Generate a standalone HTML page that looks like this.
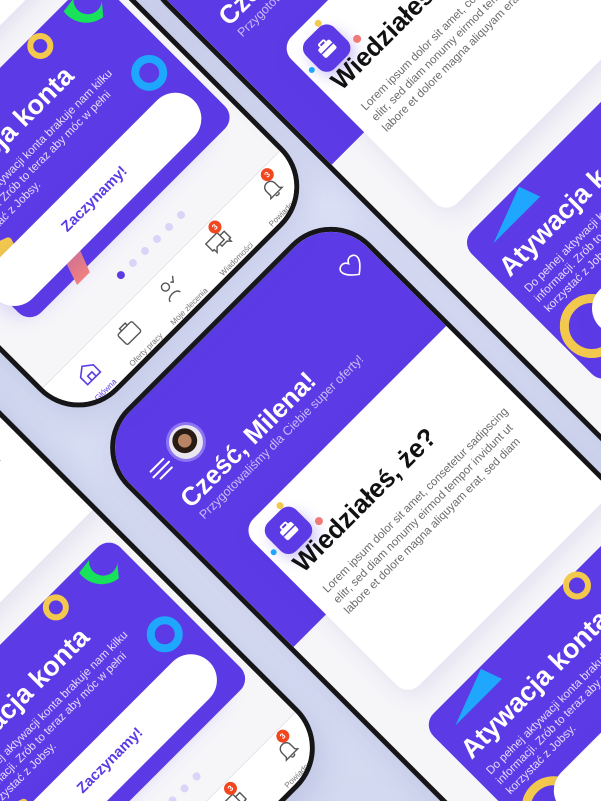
<!DOCTYPE html>
<html><head><meta charset="utf-8">
<style>
html{margin:0;padding:0;width:601px;height:801px;overflow:hidden}
body{margin:0;padding:0;width:601px;height:801px;overflow:hidden;position:relative;
background:radial-gradient(ellipse at 55% 45%,#e1e5fa 0%,#d6dcf2 55%,#ccd3ec 100%);
font-family:"Liberation Sans","Noto Sans CJK JP",sans-serif}
#stage{position:absolute;left:0;top:0;width:0;height:0;transform-origin:0 0;transform:rotate(-45deg)}
.phone{position:absolute;width:345px;height:745px;border:5px solid #161618;border-radius:56px;background:#f6f6f9;overflow:hidden;box-sizing:border-box;box-shadow:0 10px 30px rgba(80,80,160,.15)}
.hdr{position:absolute;left:0;top:0;width:100%;height:282px;background:#5c3be6}
.abs{position:absolute}
.heart{left:298px;top:45px}
.av{left:49px;top:41px;width:34px;height:34px;border-radius:50%;background:#8c74f2;padding:3px}
.av i{display:block;width:34px;height:34px;border-radius:50%;background:radial-gradient(circle at 50% 45%,#b98463 0 26%,#2a1a14 28% 48%,#e9e6ef 50%)}
.hb span{position:absolute;height:2px;background:#fff;border-radius:1px}
.t1{left:25px;top:88px;font-size:26px;font-weight:bold;color:#fff;white-space:nowrap}
.t2{left:27px;top:118px;font-size:12.5px;color:#c7bdf6;white-space:nowrap}
.c1{left:46px;top:163px;width:340px;height:235px;background:#fff;border-radius:16px;box-shadow:0 8px 24px rgba(60,40,160,.10)}
.ic{left:13px;top:13px;width:40px;height:40px;border-radius:11px;background:#5c3be6;box-shadow:0 8px 14px rgba(92,59,230,.3)}
.dot{position:absolute;border-radius:50%}
.wt{left:13px;top:50px;font-size:26px;font-weight:bold;color:#111;white-space:nowrap}
.lor{left:16px;top:95px;font-size:11.5px;line-height:15px;color:#6b6b6b;white-space:nowrap}
.c2{left:36px;top:428px;width:292px;height:202px;background:#5c3be6;border-radius:16px}
.at{left:46px;top:464px;font-size:27px;font-weight:bold;color:#fff;white-space:nowrap}
.ab{left:49px;top:502px;font-size:11.5px;line-height:14px;color:#e3dcff;white-space:nowrap}
.btn{width:280px;height:52px;border-radius:26px;background:#fff;box-shadow:0 10px 22px rgba(92,59,230,.25);font-size:15px;font-weight:bold;color:#5c3be6;text-align:center;line-height:52px}
.pg{top:656px;width:8px;height:8px;border-radius:50%;background:#dcd4f8}
.nav{left:0;top:684px;width:100%;height:70px;background:#fff;border-top:1px solid #e4e4ea}
.lab{position:absolute;top:726px;font-size:8px;color:#777;white-space:nowrap;transform:translateX(-50%)}
.ni{position:absolute;top:694px}
.badge{position:absolute;width:13px;height:13px;border-radius:50%;background:#f2461f;color:#fff;font-size:8px;line-height:13px;text-align:center;font-weight:bold}
</style></head><body>
<div id="stage">
<div class="phone" style="left:-255px;top:378px">
 <div class="hdr"></div>
 <svg class="abs heart" width="24" height="22" viewBox="0 0 24 22"><path d="M12 20 C4 14 1 10 1 6 C1 3 3.5 1 6.5 1 C9 1 11 3 12 5 C13 3 15 1 17.5 1 C20.5 1 23 3 23 6 C23 10 20 14 12 20Z" fill="none" stroke="#fff" stroke-width="1.6"/></svg>
 <div class="abs hb" style="left:20px;top:56px"><span style="left:2px;top:0;width:20px"></span><span style="left:0;top:6px;width:24px"></span><span style="left:4px;top:12px;width:18px"></span></div>
 <div class="abs av"><i></i></div>
 <div class="abs t1">Cześć, Milena!</div>
 <div class="abs t2">Przygotowaliśmy dla Ciebie super oferty!</div>
 <div class="abs c1">
  <div class="abs ic"><svg width="40" height="40" viewBox="0 0 40 40"><rect x="12" y="15" width="16" height="12" rx="2" fill="#fff"/><rect x="16.5" y="12" width="7" height="4" rx="1" fill="none" stroke="#fff" stroke-width="1.8"/><rect x="12" y="20" width="16" height="1.5" fill="#5c3be6"/></svg></div>
  <div class="dot" style="left:41px;top:6px;width:7px;height:7px;background:#f3c94d"></div>
  <div class="dot" style="left:57px;top:44px;width:8px;height:8px;background:#f07a77"></div>
  <div class="dot" style="left:4px;top:35px;width:6px;height:6px;background:#1ea7fd"></div>
  <div class="abs wt">Wiedziałeś, że?</div>
  <div class="abs lor">Lorem ipsum dolor sit amet, consetetur sadipscing<br>elitr, sed diam nonumy eirmod tempor invidunt ut<br>labore et dolore magna aliquyam erat, sed diam</div>
 </div>
 <div class="abs c2"></div>
 <svg class="abs blue" style="left:55px;top:410px" width="80" height="50"><polygon points="4,42 62,20 70,42" fill="#1ea7fd"/></svg>
 <div class="abs deco" style="left:230px;top:425px;width:16px;height:16px;border:6px solid #f3c94d;border-radius:50%"></div>
 <div class="abs deco" style="left:38px;top:548px;width:46px;height:46px;border:9px solid #f3c94d;border-radius:50%"></div>
 <div class="abs at">Atywacja konta</div>
 <div class="abs ab">Do pełnej aktywacji konta brakuje nam kilku<br>informacji. Zrób to teraz aby móc w pełni<br>korzystać z Jobsy.</div>
 <div class="abs btn" style="left:75px;top:560px">Zaczynamy!</div>
 <div class="abs pg" style="left:131px;background:#5c3be6"></div><div class="abs pg" style="left:148px"></div><div class="abs pg" style="left:165px"></div><div class="abs pg" style="left:182px"></div><div class="abs pg" style="left:199px"></div><div class="abs pg" style="left:216px"></div>
 <div class="abs nav"></div>
 <svg class="ni" style="left:31px" width="24" height="22"><path d="M3 10 L12 3 L21 10 V20 H3Z M9 20 V14 H15 V20" fill="none" stroke="#5c3be6" stroke-width="1.6"/></svg>
 <svg class="ni" style="left:88px" width="24" height="22"><rect x="2" y="6" width="20" height="14" rx="2" fill="none" stroke="#555" stroke-width="1.4"/><path d="M8 6 V3 H16 V6" fill="none" stroke="#555" stroke-width="1.4"/></svg>
 <svg class="ni" style="left:149px" width="24" height="22"><circle cx="9" cy="6" r="4" fill="none" stroke="#555" stroke-width="1.4"/><path d="M2 20 C2 14 16 14 16 20" fill="none" stroke="#555" stroke-width="1.4"/><path d="M16 6 L18 8 L22 3" fill="none" stroke="#555" stroke-width="1.4"/></svg>
 <svg class="ni" style="left:215px" width="26" height="22"><path d="M2 4 H18 V14 H8 L4 18 V14 H2Z" fill="none" stroke="#555" stroke-width="1.4"/><path d="M18 8 H24 V17 H22 V20 L19 17 H12 V14" fill="none" stroke="#555" stroke-width="1.4"/></svg>
 <div class="badge" style="left:229px;top:686px">3</div>
 <svg class="ni" style="left:291px" width="24" height="22"><path d="M6 16 V10 C6 6 9 4 12 4 C15 4 18 6 18 10 V16 L20 18 H4Z M10 19 C10 21 14 21 14 19" fill="none" stroke="#555" stroke-width="1.4"/></svg>
 <div class="badge" style="left:303px;top:686px">3</div>
 <div class="lab" style="left:43px;color:#5c3be6">Główna</div><div class="lab" style="left:100px">Oferty pracy</div><div class="lab" style="left:161px">Moje zlecenia</div><div class="lab" style="left:228px">Wiadomości</div><div class="lab" style="left:303px">Powiadomienia</div>
</div>
</div>
<script>
(function(){
 var st=document.getElementById('stage');
 var base=st.querySelector('.phone');
 function mk(l,t,varA){
  var p=base.cloneNode(true);p.style.left=l+'px';p.style.top=t+'px';
  if(varA){
   p.querySelectorAll('.deco,.blue').forEach(function(n){n.remove();});
   var at=p.querySelector('.at');
   var add=function(h){var w=document.createElement('div');w.innerHTML=h;p.insertBefore(w.firstChild,at);};
   add('<svg class="abs" style="left:275px;top:425px" width="50" height="50"><path d="M6 8 A28 28 0 0 0 30 40 L40 28 A14 14 0 0 1 22 6Z" fill="#17e25a"/></svg>');
   add('<div class="abs" style="left:227px;top:428px;width:14px;height:14px;border:6px solid #f3c94d;border-radius:50%"></div>');
   add('<div class="abs" style="left:280px;top:519px;width:20px;height:20px;border:8px solid #1ea7fd;border-radius:50%"></div>');
   add('<svg class="abs" style="left:95px;top:600px" width="40" height="40"><polygon points="14,0 34,0 20,36 2,36" fill="#f4837d"/></svg>');
   add('<div class="abs" style="left:50px;top:548px;width:30px;height:30px;background:#f3c94d;border-radius:4px;transform:rotate(20deg)"></div>');
   var b=p.querySelector('.btn');b.style.left='30px';b.style.top='562px';
  }
  st.appendChild(p);
 }
 mk(-249,-385,true);
 mk(-635,23,true);
 mk(113,64,false);
})();
</script>
</body></html>
